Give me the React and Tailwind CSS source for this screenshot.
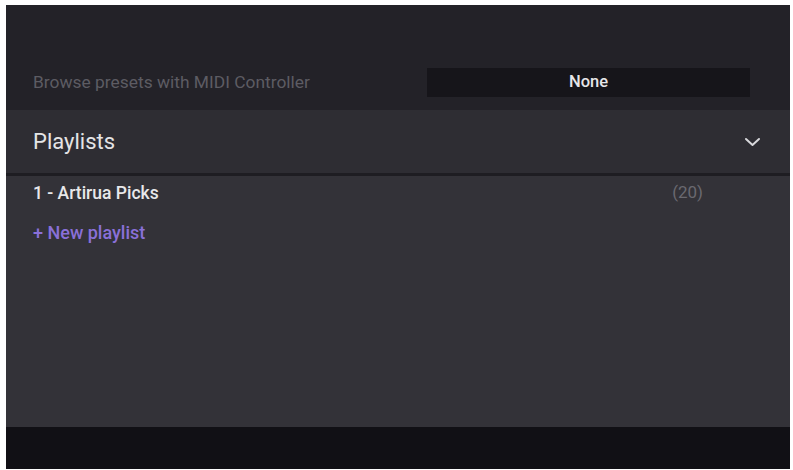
import React from "react";

export default function App() {
  return (
    <div className="w-[793px] h-[470px] bg-white pt-[5px] pl-[6px] pr-[3px] pb-[1px]" style={{ fontFamily: "Roboto, 'Liberation Sans', sans-serif" }}>
      <div className="w-[784px] h-[464px] flex flex-col bg-[#232228]">
        <div className="h-[105px] bg-[#232228] pt-[63px] flex items-start">
          <div className="flex items-center w-full h-[29px]">
            <div className="pl-[27px] flex-1 text-[17.4px] text-[#5d5c63]">Browse presets with MIDI Controller</div>
            <div className="w-[323px] h-[29px] mr-[40px] bg-[#16151a] flex items-center justify-center text-[16.5px] font-medium text-[#e6e6e8]">None</div>
          </div>
        </div>
        <div className="h-[63px] bg-[#2e2d33] flex items-center justify-between pl-[27px] pr-[29px]">
          <span className="text-[22px] text-[#e4e4e6]">Playlists</span>
          <svg width="17" height="10" viewBox="0 0 17 10" fill="none">
            <path d="M2 2 L8.5 8 L15 2" stroke="#d8d8dc" strokeWidth="2" strokeLinecap="round" strokeLinejoin="round" />
          </svg>
        </div>
        <div className="h-[3px] bg-[#1e1d22]" />
        <div className="flex-1 bg-[#333238] pl-[27px] pr-[87px] pt-[6px]">
          <div className="flex items-center justify-between h-[22px]">
            <span className="text-[17.5px] font-medium text-[#e8e8ea]">1 - Artirua Picks</span>
            <span className="text-[17px] text-[#6a6970]">(20)</span>
          </div>
          <div className="flex items-center h-[22px] mt-[17px]">
            <span className="text-[18px] font-medium text-[#8a70d8]">+ New playlist</span>
          </div>
        </div>
        <div className="h-[42px] bg-[#111015]" />
      </div>
    </div>
  );
}
